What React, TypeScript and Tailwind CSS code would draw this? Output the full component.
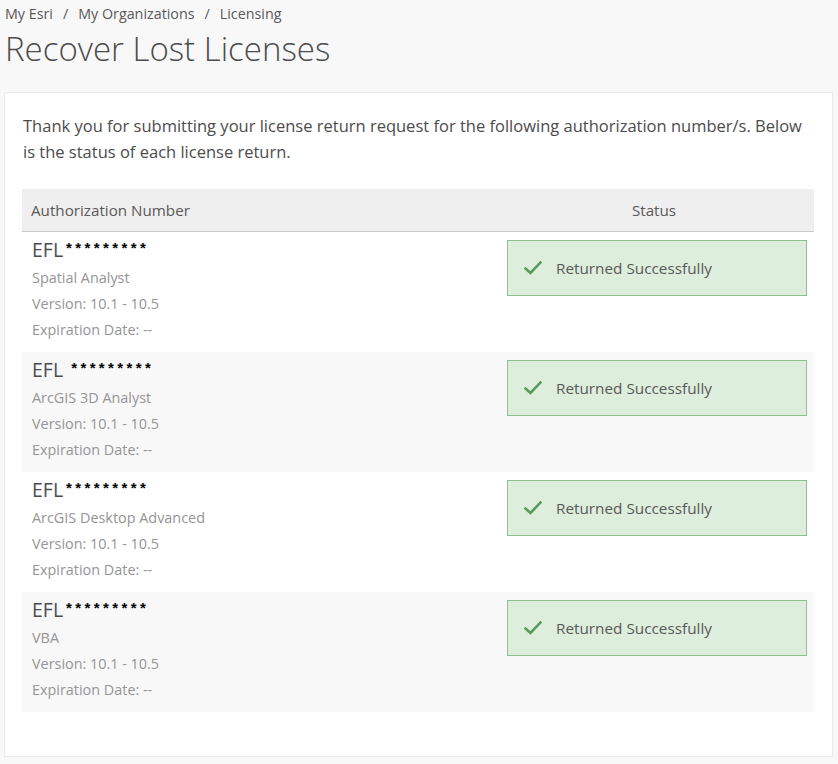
import React from "react";

const rows = [
  { num: "EFL", stars: "*********", name: "Spatial Analyst", bg: "bg-white" },
  { num: "EFL ", stars: "*********", name: "ArcGIS 3D Analyst", bg: "bg-[#f8f8f8]" },
  { num: "EFL", stars: "*********", name: "ArcGIS Desktop Advanced", bg: "bg-white" },
  { num: "EFL", stars: "*********", name: "VBA", bg: "bg-[#f8f8f8]" },
];

function Check() {
  return (
    <svg width="18" height="14" viewBox="0 0 18 14" fill="none">
      <path d="M1.5 7.5 L6.5 12 L16.5 1.5" stroke="#5b9a5d" strokeWidth="2.6" strokeLinecap="square" />
    </svg>
  );
}

export default function App() {
  return (
    <div className="min-h-[764px] w-[838px] bg-[#f8f8f8] font-['Open_Sans',sans-serif] text-[#595959]">
      <div className="px-[5px] pt-[4px]">
        <div className="flex gap-[10px] text-[14.3px] leading-[20px] text-[#595959]">
          <span>My Esri</span>
          <span>/</span>
          <span>My Organizations</span>
          <span>/</span>
          <span>Licensing</span>
        </div>
        <h1 className="mt-[3px] text-[33px] font-light leading-[44px] text-[#4c4c4c]">Recover Lost Licenses</h1>
      </div>
      <div className="mx-[4px] mt-[21px] w-[829px] border border-[#eaeaea] bg-white px-[17px] pb-[44px] pt-[20px]">
        <p className="pl-[1px] text-[16.5px] leading-[26px] text-[#4c4c4c]">
          Thank you for submitting your license return request for the following authorization number/s. Below is the status of each license return.
        </p>
        <div className="mt-[24px] w-[792px]">
          <div className="grid h-[43px] grid-cols-[1fr_316px] items-center border-b border-[#cacaca] bg-[#efefef] text-[15.2px] text-[#595959]">
            <div className="pl-[9px]">Authorization Number</div>
            <div className="pr-[4px] text-center">Status</div>
          </div>
          {rows.map((r, i) => (
            <div key={i} className={`grid h-[120px] grid-cols-[1fr_316px] ${r.bg}`}>
              <div className="pl-[10px] pt-[6px]">
                <div className="flex items-start text-[19.5px] leading-[24px] text-[#4c4c4c]">
                  <span className="whitespace-pre">{r.num}</span>
                  <span className="pl-[3px] pt-[3px] font-['Liberation_Sans',sans-serif] text-[15px] font-bold leading-[14px] tracking-[3.4px] text-black">{r.stars}</span>
                </div>
                <div className="mt-[3px] text-[14.4px] leading-[26px] text-[#959595]">{r.name}</div>
                <div className="text-[14.4px] leading-[26px] text-[#959595]">Version: 10.1 - 10.5</div>
                <div className="text-[14.4px] leading-[26px] text-[#959595]">Expiration Date: --</div>
              </div>
              <div className="pl-[9px] pr-[7px] pt-[8px]">
                <div className="flex h-[56px] items-center gap-[14px] border border-[#8fc08f] bg-[#ddeedd] pl-[16px] text-[15.3px] text-[#595959]">
                  <Check />
                  <span>Returned Successfully</span>
                </div>
              </div>
            </div>
          ))}
        </div>
      </div>
    </div>
  );
}
